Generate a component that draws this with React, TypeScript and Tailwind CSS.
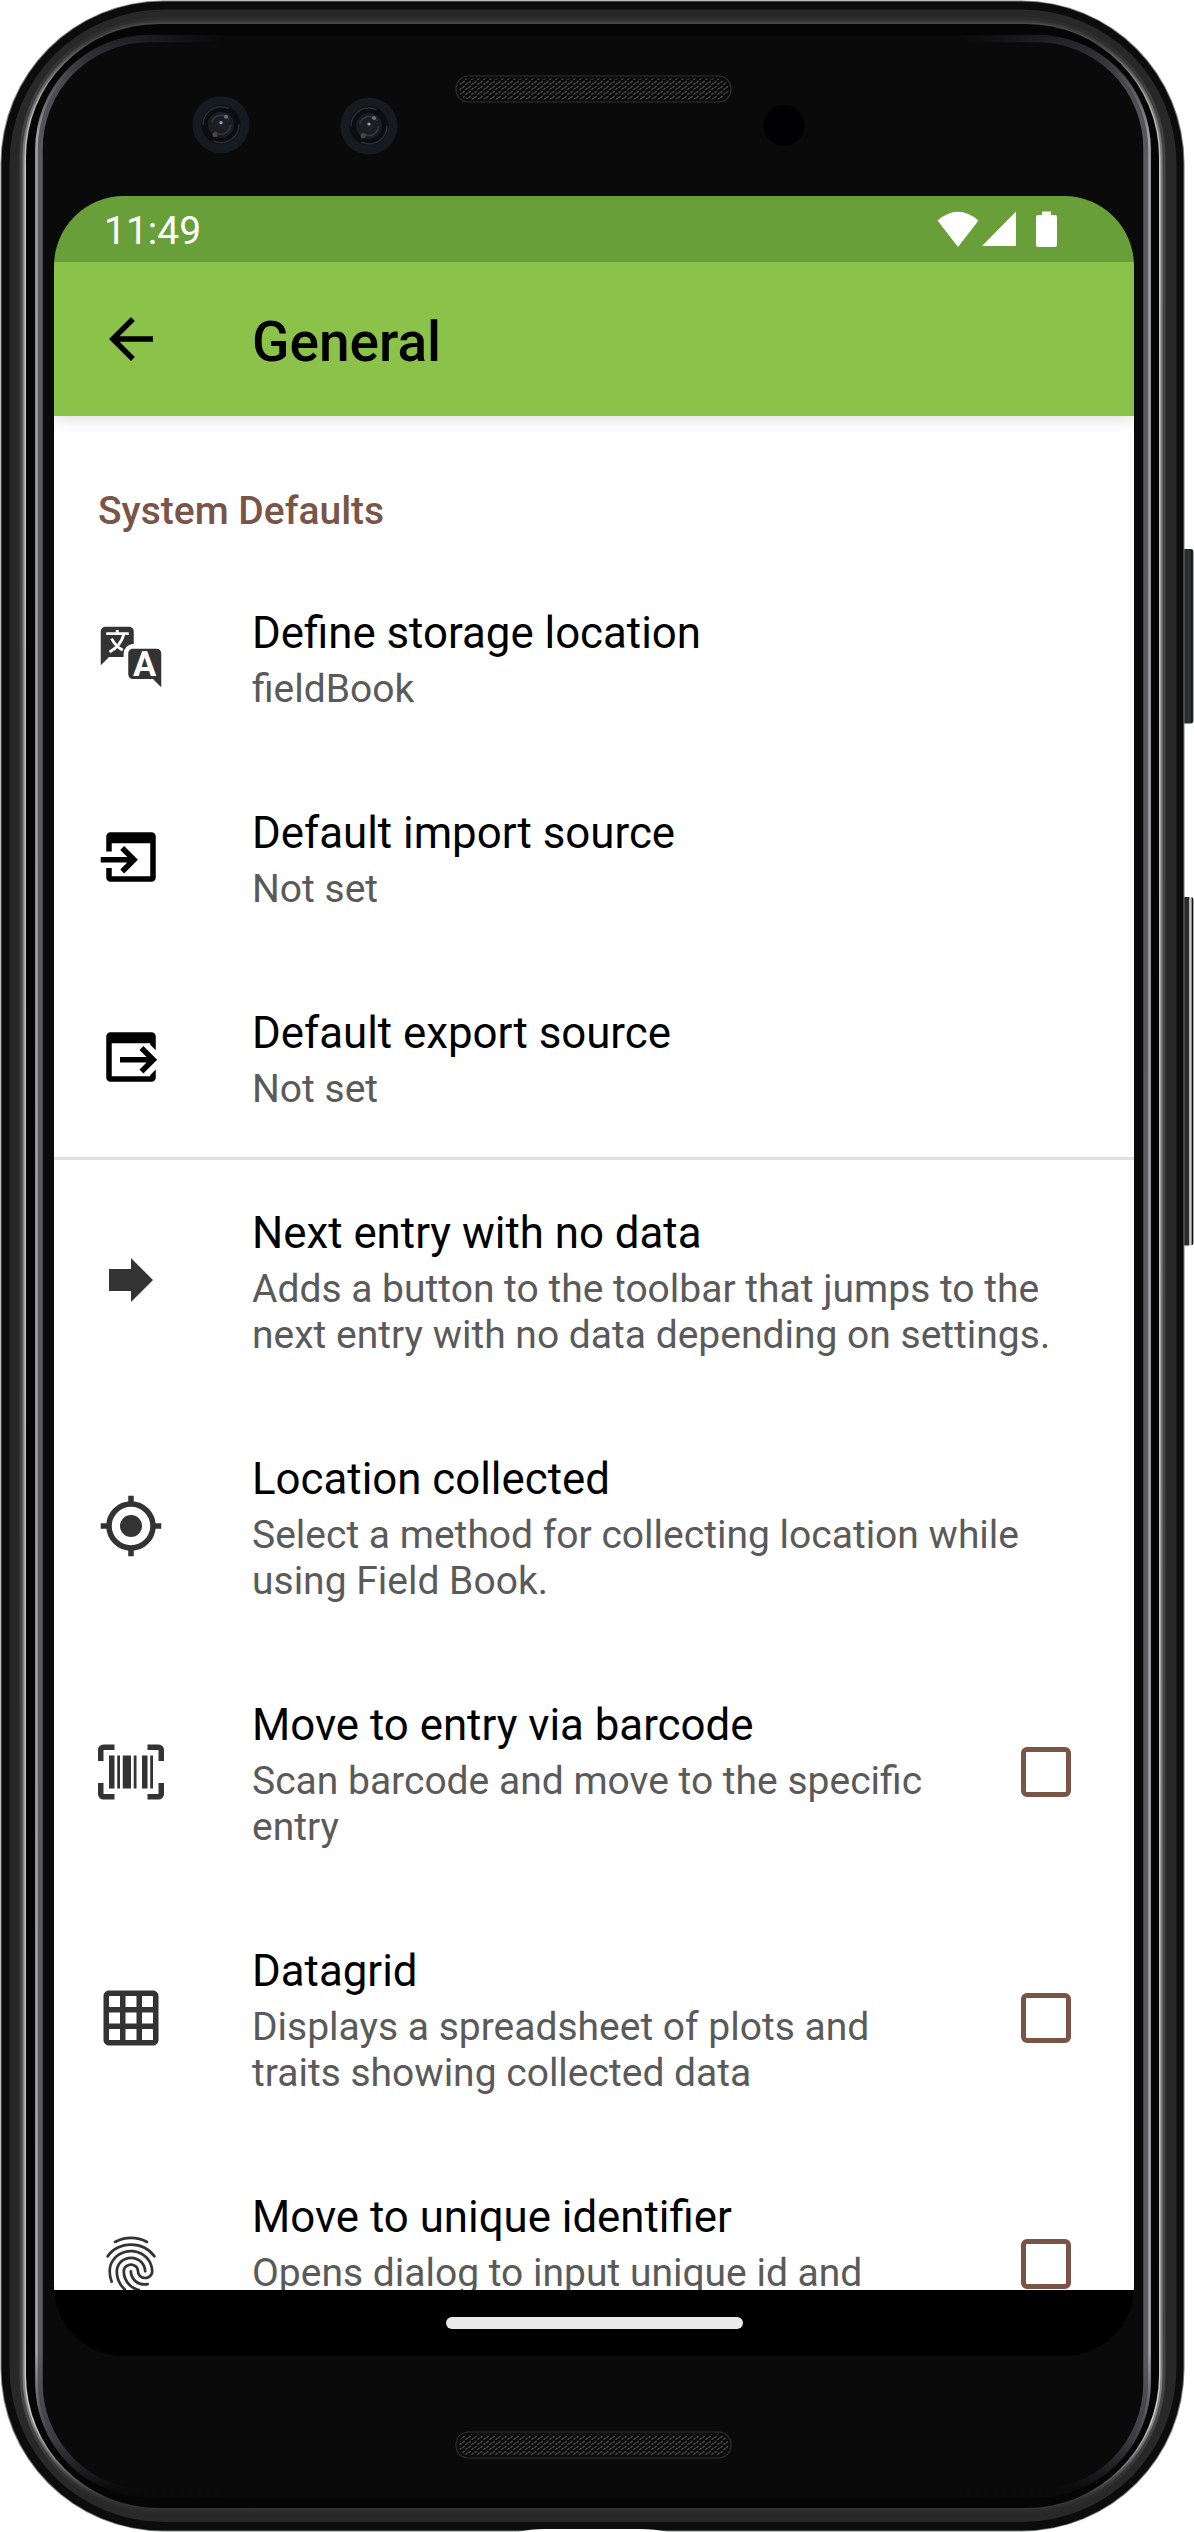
import React from "react";
import { MdFingerprint } from "react-icons/md";

const SvgIcon = ({ children, dark = false }: { children: React.ReactNode; dark?: boolean }) => (
  <svg viewBox="0 0 24 24" className={dark ? "size-[66px] text-black" : "size-[66px] text-[#333333]"} fill="currentColor">
    {children}
  </svg>
);

const TranslateIcon = () => (
  <SvgIcon>
    <path d="M2.700 1h8.600A1.700 1.700 0 0 1 13 2.700V7.300A3.500 3.500 0 0 0 9.300 10.800V12H4L1 15V2.700A1.700 1.700 0 0 1 2.700 1Z" />
    <path d="M12.700 9h8.600A1.700 1.700 0 0 1 23 10.700V23l-3-3h-7.300A1.700 1.700 0 0 1 11 18.300v-7.600A1.700 1.700 0 0 1 12.700 9Z" />
    <path d="M3 3.500H11.200M7 2.200V3.500M9.400 3.700Q8.300 8 4.200 10.200M4.900 5.300Q6.500 8.200 9 9.500" fill="none" stroke="#fff" strokeWidth="1.05" />
    <text x="17" y="19" textAnchor="middle" fontFamily="Roboto, sans-serif" fontWeight="700" fontSize="12.600" fill="#fff">A</text>
  </SvgIcon>
);

const ImportIcon = () => (
  <SvgIcon dark>
    <path d="M4.500 3h15A1.500 1.500 0 0 1 21 4.500v15a1.500 1.500 0 0 1-1.500 1.500h-15A1.500 1.500 0 0 1 3 19.500V16h2v3h14V7H5v3H3V4.500A1.500 1.500 0 0 1 4.500 3Z" />
    <path d="M1 13H12M8.800 8.710 13.090 13 8.800 17.290" fill="none" stroke="currentColor" strokeWidth="2" />
  </SvgIcon>
);

const ExportIcon = () => (
  <SvgIcon dark>
    <path d="M4.500 3h15A1.500 1.500 0 0 1 21 4.500v5L19 7.500V7H5v12h14v-.500l2-2v3a1.500 1.500 0 0 1-1.500 1.500h-15A1.500 1.500 0 0 1 3 19.500v-15A1.500 1.500 0 0 1 4.500 3Z" />
    <path d="M8 13H19M15.800 8.710 20.090 13 15.800 17.290" fill="none" stroke="currentColor" strokeWidth="2" />
  </SvgIcon>
);

const NextIcon = () => (
  <SvgIcon>
    <path d="M12 8V4l8 8-8 8v-4H4V8z" />
  </SvgIcon>
);

const LocationIcon = () => (
  <SvgIcon>
    <circle cx="12" cy="12" r="8" fill="none" stroke="currentColor" strokeWidth="2" />
    <circle cx="12" cy="12" r="4" />
    <path d="M12 1v3M12 20v3M1 12h3M20 12h3" stroke="currentColor" strokeWidth="2" />
  </SvgIcon>
);

const BarcodeIcon = () => (
  <SvgIcon>
    <path d="M4,6H6V18H4V6M7,6H8V18H7V6M9,6H12V18H9V6M13,6H14V18H13V6M16,6H18V18H16V6M19,6H20V18H19V6M2,4V8H0V4A2,2 0 0,1 2,2H6V4H2M22,2A2,2 0 0,1 24,4V8H22V4H18V2H22M2,16V20H6V22H2A2,2 0 0,1 0,20V16H2M22,20V16H24V20A2,2 0 0,1 22,22H18V20H22Z" />
  </SvgIcon>
);

const GridIcon = () => (
  <SvgIcon>
    <path d="M20 2H4c-1.100 0-2 .9-2 2v16c0 1.100.9 2 2 2h16c1.100 0 2-.9 2-2V4c0-1.100-.9-2-2-2zM8 20H4v-4h4v4zm0-6H4v-4h4v4zm0-6H4V4h4v4zm6 12h-4v-4h4v4zm0-6h-4v-4h4v4zm0-6h-4V4h4v4zm6 12h-4v-4h4v4zm0-6h-4v-4h4v4zm0-6h-4V4h4v4z" />
  </SvgIcon>
);

type Item = { title: string; lines: string[]; icon: React.ReactNode; tall?: boolean; checkbox?: boolean; divider?: boolean };

const items: Item[] = [
  { title: "Define storage location", lines: ["fieldBook"], icon: <TranslateIcon /> },
  { title: "Default import source", lines: ["Not set"], icon: <ImportIcon /> },
  { title: "Default export source", lines: ["Not set"], icon: <ExportIcon /> },
  {
    title: "Next entry with no data",
    lines: ["Adds a button to the toolbar that jumps to the", "next entry with no data depending on settings."],
    icon: <NextIcon />,
    tall: true,
    divider: true,
  },
  {
    title: "Location collected",
    lines: ["Select a method for collecting location while", "using Field Book."],
    icon: <LocationIcon />,
    tall: true,
  },
  {
    title: "Move to entry via barcode",
    lines: ["Scan barcode and move to the specific", "entry"],
    icon: <BarcodeIcon />,
    tall: true,
    checkbox: true,
  },
  {
    title: "Datagrid",
    lines: ["Displays a spreadsheet of plots and", "traits showing collected data"],
    icon: <GridIcon />,
    tall: true,
    checkbox: true,
  },
  {
    title: "Move to unique identifier",
    lines: ["Opens dialog to input unique id and"],
    icon: <MdFingerprint className="size-[66px] text-[#333333]" />,
    tall: true,
    checkbox: true,
  },
];

const Row = ({ item }: { item: Item }) => (
  <div className={item.tall ? "relative flex h-[246px] shrink-0 items-center pl-11" : "relative flex h-[200px] shrink-0 items-center pl-11"}>
    {item.divider && <div className="absolute inset-x-0 top-0 h-[3px] bg-[#e0e0e0]" />}
    <div className="w-[154px] shrink-0">{item.icon}</div>
    <div className="flex-1 self-start whitespace-nowrap pt-[50px]">
      <div className="text-[43.8px] leading-[52px] text-black">{item.title}</div>
      <div className="mt-[7px] text-[39px] leading-[46px] text-[#5a5a5a]">
        {item.lines.map((line) => (
          <div key={line}>{line}</div>
        ))}
      </div>
    </div>
    {item.checkbox && <div className="mr-[63px] size-[50px] shrink-0 rounded-[6px] border-[5.5px] border-[#795548]" />}
  </div>
);

const Camera = ({ cx, cy }: { cx: number; cy: number }) => (
  <g transform={`translate(${cx} ${cy})`}>
    <circle r="28.500" fill="#151b20" />
    <circle r="19.500" fill="#0b0d10" />
    <circle r="18" fill="none" stroke="#2c3033" strokeWidth="1.500" strokeDasharray="36 20" />
    <circle r="13" fill="#1b1e21" />
    <circle r="9.500" fill="none" stroke="#34393c" strokeWidth="1.500" strokeDasharray="22 10" />
    <circle r="5" fill="#211f2c" />
    <circle cy="-2" r="1.600" fill="#a0a0b0" />
    <circle cx="5" cy="-8" r="2" fill="#6c7073" />
    <circle cx="-6" cy="10" r="2.500" fill="#4c4545" />
  </g>
);

const DeviceArt = () => (
  <svg viewBox="0 0 1194 2532" className="absolute inset-0 h-[2532px] w-[1194px]">
    <defs>
      <linearGradient id="edge" x1="0" x2="0" y1="24" y2="2508" gradientUnits="userSpaceOnUse">
        <stop offset="0" stopColor="#484848" />
        <stop offset="0.008" stopColor="#4c4c4c" />
        <stop offset="0.03" stopColor="#b0b0b0" />
        <stop offset="0.06" stopColor="#c8c8c8" />
        <stop offset="0.93" stopColor="#c4c4c4" />
        <stop offset="0.965" stopColor="#d0d0d0" />
        <stop offset="0.995" stopColor="#3c3c3c" />
        <stop offset="1" stopColor="#333333" />
      </linearGradient>
      <linearGradient id="rim" x1="0" x2="0" y1="36" y2="2500" gradientUnits="userSpaceOnUse">
        <stop offset="0" stopColor="#1d1d24" />
        <stop offset="0.02" stopColor="#4b4a52" />
        <stop offset="0.05" stopColor="#5c5b63" />
        <stop offset="0.94" stopColor="#5c5b63" />
        <stop offset="0.975" stopColor="#3c3b44" />
        <stop offset="0.996" stopColor="#0a0a0a" />
      </linearGradient>
      <linearGradient id="rimLight" x1="0" x2="0" y1="36" y2="2500" gradientUnits="userSpaceOnUse">
        <stop offset="0" stopColor="#24242a" stopOpacity="0" />
        <stop offset="0.04" stopColor="#a0a0a0" />
        <stop offset="0.94" stopColor="#a6a6a6" />
        <stop offset="0.98" stopColor="#55555a" stopOpacity="0" />
      </linearGradient>
      <linearGradient id="rimFade" x1="34" x2="1152" y1="0" y2="0" gradientUnits="userSpaceOnUse">
        <stop offset="0.09" stopColor="#fff" />
        <stop offset="0.17" stopColor="#000" />
        <stop offset="0.83" stopColor="#000" />
        <stop offset="0.91" stopColor="#fff" />
      </linearGradient>
      <mask id="rimMask" maskUnits="userSpaceOnUse" x="0" y="0" width="1194" height="2532">
        <rect width="1194" height="2532" fill="url(#rimFade)" />
      </mask>
      <linearGradient id="volume" x1="1184" x2="1194" y1="0" y2="0" gradientUnits="userSpaceOnUse">
        <stop offset="0" stopColor="#242424" />
        <stop offset="0.45" stopColor="#2f2f2f" />
        <stop offset="0.6" stopColor="#f0f0f0" />
        <stop offset="0.75" stopColor="#8a8a8a" />
        <stop offset="0.85" stopColor="#111111" />
        <stop offset="1" stopColor="#666666" />
      </linearGradient>
      <linearGradient id="power" x1="1184" x2="1194" y1="0" y2="0" gradientUnits="userSpaceOnUse">
        <stop offset="0" stopColor="#252828" />
        <stop offset="0.6" stopColor="#303434" />
        <stop offset="0.8" stopColor="#0c0c0c" />
        <stop offset="1" stopColor="#666666" />
      </linearGradient>
      <pattern id="mesh" width="6" height="5" patternUnits="userSpaceOnUse">
        <rect width="6" height="5" fill="#0b0b0b" />
        <path d="M0.500 3 2.500 0.800M3.500 4.800 5.500 2.800" stroke="#5c5c5c" strokeWidth="1.100" />
      </pattern>
    </defs>

    <rect x="1182" y="549" width="11.500" height="174.500" rx="3" fill="url(#power)" />
    <rect x="1182" y="897" width="11.500" height="348.500" rx="3" fill="url(#volume)" />

    <rect x="0.500" y="0.500" width="1184" height="2531" rx="163" fill="#777b79" />
    <rect x="1.500" y="1.500" width="1182" height="2529" rx="162" fill="#0c0c0c" />
    <rect x="9.500" y="9.500" width="1167" height="2512.500" rx="154" fill="#282828" />
    <rect x="26" y="24" width="1133" height="2484" rx="133" fill="none" stroke="url(#edge)" strokeOpacity="0.18" strokeWidth="13" />
    <rect x="26" y="24" width="1133" height="2484" rx="133" fill="none" stroke="url(#edge)" strokeOpacity="0.45" strokeWidth="7" />
    <rect x="26" y="24" width="1133" height="2484" rx="133" fill="none" stroke="url(#edge)" strokeWidth="3" />
    <rect x="26" y="24" width="1133" height="2484" rx="133" fill="#050505" />
    <rect x="34" y="35" width="1118" height="2463" rx="118" fill="#0a0a0a" />
    <g mask="url(#rimMask)" fill="none">
      <rect x="39" y="38.500" width="1108" height="2455" rx="110" stroke="url(#rim)" strokeWidth="7.500" />
      <rect x="36.500" y="36.500" width="1113" height="2459" rx="113" stroke="url(#rimLight)" strokeWidth="2.500" />
    </g>

    <rect x="456" y="76" width="275" height="26" rx="12.500" fill="#0b0b0b" stroke="#303030" strokeWidth="1.200" />
    <rect x="458.500" y="78.500" width="270" height="21" rx="10.500" fill="url(#mesh)" />
    <rect x="456" y="2432" width="275" height="26" rx="12.500" fill="#0b0b0b" stroke="#303030" strokeWidth="1.200" />
    <rect x="458.500" y="2434.500" width="270" height="21" rx="10.500" fill="url(#mesh)" />
    <Camera cx={221} cy={124.700} />
    <Camera cx={369} cy={126} />
    <circle cx="784" cy="125.500" r="20.500" fill="#010002" />
    <path d="M518 2532Q530 2529 545 2529H640Q655 2529 668 2532Z" fill="#fff" />
  </svg>
);

export default function App() {
  return (
    <div className="relative h-[2532px] w-[1194px] overflow-hidden bg-white pl-[54px] pt-[196px] font-[Roboto,sans-serif]">
      <DeviceArt />
      <div className="relative flex h-[2160px] w-[1080px] flex-col overflow-hidden rounded-[70px] bg-black">
        <div className="relative z-20 flex h-[66px] shrink-0 items-center justify-between bg-[#689f38] pl-[50px] pr-[74px] text-white">
          <span className="pt-[3px] text-[39px] leading-[46px]">11:49</span>
          <svg viewBox="0 0 126 40" className="h-10 w-[126px]" fill="#fff">
            <path d="M3.500 11.500Q24 -6 44.500 11.500L24 38Z" />
            <path d="M82 2.500V37H48Z" />
            <path d="M108 2.500h9V6h4a2 2 0 0 1 2 2V36a2 2 0 0 1-2 2h-17a2 2 0 0 1-2-2V8a2 2 0 0 1 2-2h4Z" />
          </svg>
        </div>
        <div className="relative z-10 flex h-[154px] shrink-0 items-center bg-[#8bc34a] pl-11 shadow-[0_2px_16px_rgba(0,0,0,0.15)]">
          <svg viewBox="0 0 24 24" className="mr-[88px] size-[66px]">
            <path d="M20 11H7.830l5.590-5.590L12 4l-8 8 8 8 1.410-1.410L7.830 13H20v-2z" />
          </svg>
          <h1 className="pt-[5px] text-[55px] font-medium leading-[64px] text-black">General</h1>
        </div>
        <div className="flex min-h-0 flex-1 flex-col overflow-hidden bg-white">
          <div className="h-[141px] shrink-0 pl-11 pt-[72px] text-[39px] font-medium leading-[46px] text-[#795548]">System Defaults</div>
          {items.map((item) => (
            <Row key={item.title} item={item} />
          ))}
        </div>
        <div className="flex h-[66px] shrink-0 items-center justify-center bg-black">
          <div className="h-3 w-[297px] rounded-full bg-[#eaeaea]" />
        </div>
      </div>
    </div>
  );
}
